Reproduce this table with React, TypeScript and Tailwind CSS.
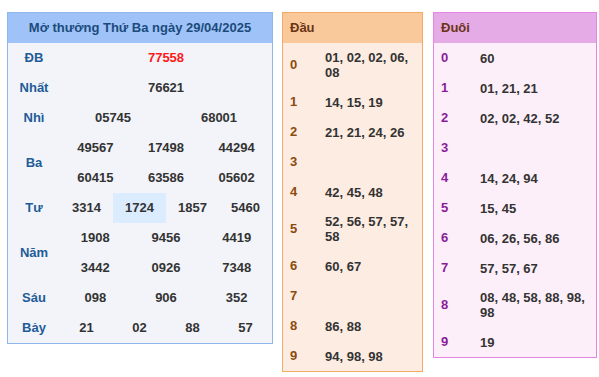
type Prize = { label: string; lines: string[][]; red?: boolean };

const prizes: Prize[] = [
  { label: "ĐB", lines: [["77558"]], red: true },
  { label: "Nhất", lines: [["76621"]] },
  { label: "Nhì", lines: [["05745", "68001"]] },
  { label: "Ba", lines: [["49567", "17498", "44294"], ["60415", "63586", "05602"]] },
  { label: "Tư", lines: [["3314", "1724", "1857", "5460"]] },
  { label: "Năm", lines: [["1908", "9456", "4419"], ["3442", "0926", "7348"]] },
  { label: "Sáu", lines: [["098", "906", "352"]] },
  { label: "Bảy", lines: [["21", "02", "88", "57"]] },
];

const dau = [
  "01, 02, 02, 06, 08",
  "14, 15, 19",
  "21, 21, 24, 26",
  "",
  "42, 45, 48",
  "52, 56, 57, 57, 58",
  "60, 67",
  "",
  "86, 88",
  "94, 98, 98",
];

const duoi = [
  "60",
  "01, 21, 21",
  "02, 02, 42, 52",
  "",
  "14, 24, 94",
  "15, 45",
  "06, 26, 56, 86",
  "57, 57, 67",
  "08, 48, 58, 88, 98, 98",
  "19",
];

const gridCols: Record<number, string> = {
  1: "grid-cols-1",
  2: "grid-cols-2",
  3: "grid-cols-3",
  4: "grid-cols-4",
};

function ResultTable() {
  return (
    <div className="w-[266px] border border-[#8fb6ee] bg-[#f2f4f9]">
      <div className="h-[30px] bg-[#9fc3f8] flex items-center justify-center text-[#1b4b7c]">
        Mở thưởng Thứ Ba ngày 29/04/2025
      </div>
      {prizes.map((p) => (
        <div key={p.label} className="flex">
          <div className="w-[52px] flex items-center justify-center text-[#1f5c97]">{p.label}</div>
          <div className="flex-1 flex flex-col">
            {p.lines.map((line, i) => (
              <div key={i} className={`grid ${gridCols[line.length]} h-[30px]`}>
                {line.map((n, j) => (
                  <div
                    key={j}
                    className={`flex items-center justify-center ${
                      p.red ? "text-[#ff1a1a]" : "text-[#333333]"
                    } ${p.label === "Tư" && j === 1 ? "bg-[#daecfd]" : ""}`}
                  >
                    {n}
                  </div>
                ))}
              </div>
            ))}
          </div>
        </div>
      ))}
    </div>
  );
}

function LotoPanel({
  title,
  rows,
  width,
  digitWidth,
  frame,
  head,
  body,
  digit,
}: {
  title: string;
  rows: string[];
  width: string;
  digitWidth: string;
  frame: string;
  head: string;
  body: string;
  digit: string;
}) {
  return (
    <div className={`${width} border ${frame} ${body}`}>
      <div className={`h-[30px] ${head} flex items-center px-[7px] text-[#6a3416]`}>{title}</div>
      {rows.map((v, i) => (
        <div key={i} className="flex items-center min-h-[30px]">
          <div className={`${digitWidth} shrink-0 pl-[7px] ${digit}`}>{i}</div>
          <div className="flex-1 pl-[7px] pr-[4px] py-[7px] leading-[15px] text-[#333333]">{v}</div>
        </div>
      ))}
    </div>
  );
}

export default function App() {
  return (
    <div
      className="w-[599px] h-[377px] bg-white flex items-start pl-[7px] pt-[12px] text-[13px] font-bold"
      style={{ fontFamily: '"Liberation Sans", Arial, sans-serif' }}
    >
      <ResultTable />
      <div className="ml-[9px]">
        <LotoPanel
          title="Đầu"
          rows={dau}
          width="w-[141px]"
          digitWidth="w-[35px]"
          frame="border-[#f4ab66]"
          head="bg-[#fac99b]"
          body="bg-[#fdece1]"
          digit="text-[#8c4a0c]"
        />
      </div>
      <div className="ml-[10px]">
        <LotoPanel
          title="Đuôi"
          rows={duoi}
          width="w-[164px]"
          digitWidth="w-[39px]"
          frame="border-[#e884e4]"
          head="bg-[#e4abe6]"
          body="bg-[#fdeff9]"
          digit="text-[#8a1c9a]"
        />
      </div>
    </div>
  );
}
